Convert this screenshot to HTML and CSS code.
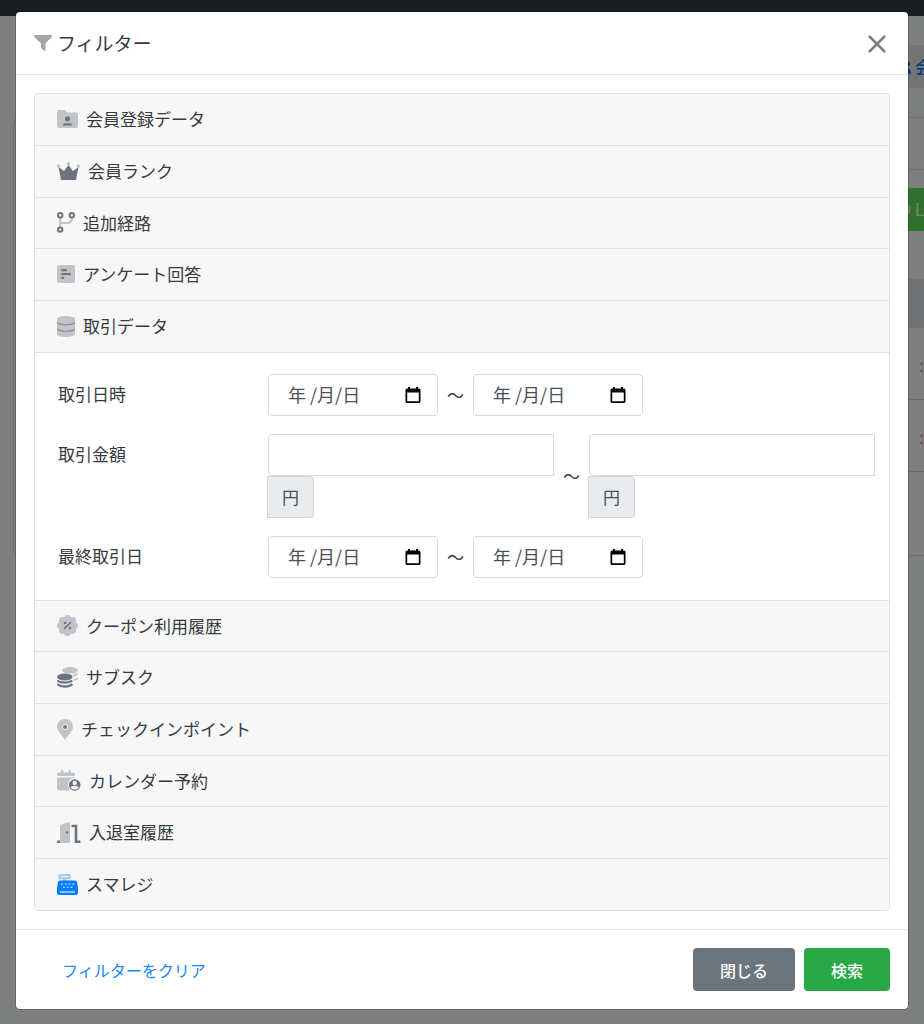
FILE: index.html
```html
<!DOCTYPE html>
<html lang="ja">
<head>
    <meta charset="UTF-8">
    <meta name="viewport" content="width=device-width, initial-scale=1.0">
    <title>フィルター</title>
    <link rel="stylesheet" href="styles.css">
</head>
<body>
    <!-- Page behind the modal -->
    <div class="page">
        <div class="navbar"></div>
        <div class="page-tabs">
            <span class="page-tab"><svg width="16" height="16" viewBox="0 0 16 16" fill="currentColor"><circle cx="6" cy="4" r="3"/><circle cx="12" cy="5" r="3"/><path d="M0 15c0-8 12-8 12 0zM10 9c4-1 6 2 6 6h-3z"/></svg> 会</span>
        </div>
        <div class="page-card">
            <div class="page-bar"></div>
            <div class="page-tools"><span class="page-download">D L</span></div>
            <div class="page-thead"></div>
            <div class="page-row"><span>:</span></div>
            <div class="page-row"><span>:</span></div>
            <div class="page-last"></div>
        </div>
    </div>

    <div class="backdrop">
        <form class="modal" role="dialog" aria-labelledby="modal-title">
            <div class="modal-header">
                <svg class="icon-filter" width="18" height="16" viewBox="0 0 18 16"><path fill="#a3a5a8" d="M1 0h16q1 0 1 1 0 .5-.4 1L11.500 8.500V15q0 1-1 .8l-3-2.200q-.5-.4-.5-1V8.500L.4 2Q0 1.500 0 1q0-1 1-1z"/></svg>
                <h5 id="modal-title" class="modal-title">フィルター</h5>
                <button type="button" class="close" aria-label="閉じる">
                    <svg width="18" height="18" viewBox="0 0 18 18"><path d="M1 1l16 16M17 1L1 17" stroke="#7f7f7f" stroke-width="2.500"/></svg>
                </button>
            </div>

            <div class="modal-body">
                <div class="accordion">
                    <button type="button" class="accordion-header">
                        <svg width="21" height="18" viewBox="0 0 21 18"><path fill="#c0c4c8" d="M2 0h6l2 2.500h9q2 0 2 2V16q0 2-2 2H2q-2 0-2-2V2q0-2 2-2z"/><g fill="#6c757d"><circle cx="10.500" cy="8.800" r="2.600"/><path d="M6 15.500q0-2.300 2-2.300h5q2 0 2 2.300z"/></g></svg>
                        会員登録データ
                    </button>
                    <button type="button" class="accordion-header">
                        <svg width="23" height="18" viewBox="0 0 23 18"><g fill="#c0c4c8"><circle cx="1.700" cy="4" r="1.700"/><circle cx="11.500" cy="1.800" r="1.800"/><circle cx="21.300" cy="4" r="1.700"/></g><path fill="#6c757d" d="M1.500 5L7 9l4.500-6L16 9l5.500-4L19 18H4z"/></svg>
                        会員ランク
                    </button>
                    <button type="button" class="accordion-header">
                        <svg width="18" height="21" viewBox="0 0 18 21" fill="none"><path d="M3.200 6v9M3.200 11H10q4.800 0 4.800-5" stroke="#c0c4c8" stroke-width="2.200"/><g stroke="#6c757d" stroke-width="2"><circle cx="3.200" cy="3.200" r="2.200"/><circle cx="14.800" cy="3.200" r="2.200"/><circle cx="3.200" cy="17.600" r="2.200"/></g></svg>
                        追加経路
                    </button>
                    <button type="button" class="accordion-header">
                        <svg width="18" height="18" viewBox="0 0 18 18"><rect width="18" height="18" rx="2" fill="#c0c4c8"/><path d="M5.200 5.200H9M5.200 9h7.800M5.200 12.800h1" stroke="#6c757d" stroke-width="2.200" stroke-linecap="round"/></svg>
                        アンケート回答
                    </button>
                    <button type="button" class="accordion-header" aria-expanded="true">
                        <svg width="18" height="21" viewBox="0 0 18 21"><path fill="#c0c4c8" d="M0 3c0-4 18-4 18 0v15c0 4-18 4-18 0z"/><path d="M0 6.500c3 3 15 3 18 0M0 13c3 3 15 3 18 0" fill="none" stroke="#858d94" stroke-width="1.200"/></svg>
                        取引データ
                    </button>

                    <div class="accordion-body">
                        <div class="field">
                            <label for="deal-from">取引日時</label>
                            <div class="range">
                                <span class="date">
                                    <input type="text" id="deal-from" class="form-control" placeholder="年 /月/日">
                                    <svg class="icon-date" width="16" height="18" viewBox="0 0 16 18"><path fill="#000" fill-rule="evenodd" d="M3 1h2v1.500h6V1h2v1.500h1q1.500 0 1.500 1.500v11.500q0 1.500-1.500 1.500H2Q.5 17 .5 15.500V4Q.5 2.500 2 2.500h1zM2.200 6.500v8.800h11.600V6.500z"/></svg>
                                </span>
                                <span class="tilde">～</span>
                                <span class="date">
                                    <input type="text" class="form-control" placeholder="年 /月/日" aria-label="取引日時 終了">
                                    <svg class="icon-date" width="16" height="18" viewBox="0 0 16 18"><path fill="#000" fill-rule="evenodd" d="M3 1h2v1.500h6V1h2v1.500h1q1.500 0 1.500 1.500v11.500q0 1.500-1.500 1.500H2Q.5 17 .5 15.500V4Q.5 2.500 2 2.500h1zM2.200 6.500v8.800h11.600V6.500z"/></svg>
                                </span>
                            </div>
                        </div>
                        <div class="field">
                            <label for="price-from">取引金額</label>
                            <div class="range">
                                <div class="amount">
                                    <input type="text" id="price-from" class="form-control">
                                    <span class="unit">円</span>
                                </div>
                                <span class="tilde">～</span>
                                <div class="amount">
                                    <input type="text" class="form-control" aria-label="取引金額 上限">
                                    <span class="unit">円</span>
                                </div>
                            </div>
                        </div>
                        <div class="field">
                            <label for="last-from">最終取引日</label>
                            <div class="range">
                                <span class="date">
                                    <input type="text" id="last-from" class="form-control" placeholder="年 /月/日">
                                    <svg class="icon-date" width="16" height="18" viewBox="0 0 16 18"><path fill="#000" fill-rule="evenodd" d="M3 1h2v1.500h6V1h2v1.500h1q1.500 0 1.500 1.500v11.500q0 1.500-1.500 1.500H2Q.5 17 .5 15.500V4Q.5 2.500 2 2.500h1zM2.200 6.500v8.800h11.600V6.500z"/></svg>
                                </span>
                                <span class="tilde">～</span>
                                <span class="date">
                                    <input type="text" class="form-control" placeholder="年 /月/日" aria-label="最終取引日 終了">
                                    <svg class="icon-date" width="16" height="18" viewBox="0 0 16 18"><path fill="#000" fill-rule="evenodd" d="M3 1h2v1.500h6V1h2v1.500h1q1.500 0 1.500 1.500v11.500q0 1.500-1.500 1.500H2Q.5 17 .5 15.500V4Q.5 2.500 2 2.500h1zM2.200 6.500v8.800h11.600V6.500z"/></svg>
                                </span>
                            </div>
                        </div>
                    </div>

                    <button type="button" class="accordion-header">
                        <svg width="21" height="21" viewBox="0 0 21 21"><g fill="#c0c4c8"><circle cx="10.500" cy="10.500" r="9.200"/><circle cx="10.500" cy="3.300" r="3.300"/><circle cx="15.600" cy="5.400" r="3.300"/><circle cx="17.700" cy="10.500" r="3.300"/><circle cx="15.600" cy="15.600" r="3.300"/><circle cx="10.500" cy="17.700" r="3.300"/><circle cx="5.400" cy="15.600" r="3.300"/><circle cx="3.300" cy="10.500" r="3.300"/><circle cx="5.400" cy="5.400" r="3.300"/></g><path d="M7.500 13.500l6-6" stroke="#6c757d" stroke-width="1.500" stroke-linecap="round"/><circle cx="8" cy="8" r="1.300" fill="#6c757d"/><circle cx="13" cy="13" r="1.300" fill="#6c757d"/></svg>
                        クーポン利用履歴
                    </button>
                    <button type="button" class="accordion-header">
                        <svg width="21" height="21" viewBox="0 0 21 21"><ellipse cx="13" cy="3.300" rx="7.800" ry="3.300" fill="#c0c4c8"/><path d="M16 8.500q3-.5 4.800-2M17 13q2.500-.5 3.800-1.700" fill="none" stroke="#c0c4c8" stroke-width="1.800"/><ellipse cx="7.800" cy="10" rx="7.800" ry="3.400" fill="#6c757d"/><path d="M.3 13.500c3 2.700 12 2.700 15 0M.3 17c3 3.300 12 3.300 15 0" fill="none" stroke="#6c757d" stroke-width="2.300"/></svg>
                        サブスク
                    </button>
                    <button type="button" class="accordion-header">
                        <svg width="16" height="21" viewBox="0 0 16 21"><path fill="#c0c4c8" d="M8 21C6 17 0 12 0 8a8 8 0 0116 0c0 4-6 9-8 13z"/><circle cx="8" cy="8" r="3" fill="#eee"/><circle cx="8" cy="8" r="2" fill="#6c757d"/></svg>
                        チェックインポイント
                    </button>
                    <button type="button" class="accordion-header">
                        <svg width="24" height="21" viewBox="0 0 24 21"><path fill="#c0c4c8" d="M2 2.500h2V1q0-1 1.200-1T6.500 1v1.500h5V1q0-1 1.300-1T14 1v1.500h2.500q1.500 0 1.500 2V6H0V4.500q0-2 2-2zM0 7.500h18V8q-7 0-7 7 0 3 2.500 5.500H2q-2 0-2-2z"/><circle cx="17.700" cy="15" r="5.800" fill="#6c757d"/><circle cx="17.700" cy="13" r="2.200" fill="#f7f7f7"/><path d="M13.800 18q0-2 2.200-2h3.400q2.200 0 2.200 2-4 3-7.800 0z" fill="#f7f7f7"/></svg>
                        カレンダー予約
                    </button>
                    <button type="button" class="accordion-header">
                        <svg width="24" height="21" viewBox="0 0 24 21"><path fill="#c0c4c8" d="M3 3l8.500-2.800q1.500-.3 1.500 1V21H3z"/><path d="M0 19.700h3M14.500 4H19v15.700h4.500" fill="none" stroke="#6c757d" stroke-width="2.600"/><circle cx="10" cy="10.500" r="1.200" fill="#6c757d"/></svg>
                        入退室履歴
                    </button>
                    <button type="button" class="accordion-header">
                        <svg width="21" height="21" viewBox="0 0 21 21"><path fill="#99caff" fill-rule="evenodd" d="M2.500 0h10q1 0 1 1v3.300q0 1-1 1H9V7H6V5.300H2.500q-1 0-1-1V1q0-1 1-1zM3.500 2v1.300h8V2z"/><path fill="#007bff" d="M3 6.500h15q1.700 0 2 1.500l1 6v5q0 2-2 2H2q-2 0-2-2v-5l1-6q.3-1.500 2-1.500z"/><path d="M4 10h14M6 13.300h10" stroke="#b5d9ff" stroke-width="1.600" stroke-dasharray="1.800 2"/><path d="M3 18h15" stroke="#b5d9ff" stroke-width="1.500"/></svg>
                        スマレジ
                    </button>
                </div>
            </div>

            <div class="modal-footer">
                <a href="#" class="clear-link">フィルターをクリア</a>
                <button type="button" class="btn btn-secondary">閉じる</button>
                <button type="submit" class="btn btn-success">検索</button>
            </div>
        </form>
    </div>
</body>
</html>
```
FILE: styles.css
```css
* {
    box-sizing: border-box;
}

body {
    margin: 0;
    font-family: "Noto Sans CJK JP", sans-serif;
    font-size: 17px;
    line-height: 26px;
    color: #343a40;
    background: #fbfffd;
}

button,
input {
    font-family: inherit;
    font-size: inherit;
    line-height: inherit;
}

/* Page behind the modal */
.page {
    height: 100vh;
    overflow: hidden;
}

.navbar {
    height: 16px;
    background: #343a40;
}

.page-tabs {
    display: flex;
    justify-content: flex-end;
    padding: 29px 0;
}

.page-tab {
    display: flex;
    align-items: center;
    gap: 4px;
    height: 43px;
    padding-left: 28px;
    background: #e9e9e9;
    color: #007bff;
    font-weight: 500;
    white-space: nowrap;
    margin-right: -8px;
}

.page-card {
    margin-left: 13px;
    padding-left: 10px;
    background: #fff;
    border: 1px solid #dcdcdc;
    border-right: 0;
    border-radius: 8px 0 0 8px;
}

.page-bar {
    height: 52px;
    border-bottom: 1px solid #dcdcdc;
}

.page-tools {
    display: flex;
    justify-content: flex-end;
    height: 109px;
    padding-top: 18px;
}

.page-download {
    height: 43px;
    padding: 8px 0 8px 80px;
    background: #5fe05f;
    color: #fff;
    text-align: right;
    white-space: nowrap;
}

.page-thead {
    height: 48px;
    background: #dee2e6;
}

.page-row {
    height: 72px;
    padding-top: 24px;
    border-top: 1px solid #dcdcdc;
    color: #d08000;
    text-align: right;
}

.page-last {
    height: 84px;
    border-top: 1px solid #dcdcdc;
}

/* Modal */
.backdrop {
    position: absolute;
    top: 0;
    left: 0;
    width: 100%;
    min-height: 100%;
    padding: 11px 15px;
    background: rgba(0, 0, 0, 0.5);
}

.modal {
    background: #fff;
    background-clip: padding-box;
    border: 1px solid rgba(0, 0, 0, 0.2);
    border-radius: 5px;
}

.modal-header {
    display: flex;
    align-items: center;
    gap: 5px;
    height: 63px;
    padding: 0 22px 0 18px;
    border-bottom: 1px solid #e3e5e7;
}

.modal-title {
    margin: 0;
    font-size: 19px;
    font-weight: 400;
}

.close {
    display: flex;
    margin-left: auto;
    padding: 2px 0 0;
    border: 0;
    background: none;
    cursor: pointer;
}

.modal-body {
    padding: 18px;
}

.accordion {
    border: 1px solid #dfdfdf;
    border-radius: 4px;
    overflow: hidden;
}

.accordion-header {
    display: flex;
    align-items: center;
    gap: 8px;
    width: 100%;
    height: 52px;
    padding: 0 22px 1px;
    border: 0;
    border-bottom: 1px solid #dfdfdf;
    background: #f7f7f7;
    color: #343a40;
    text-align: left;
    cursor: pointer;
}

.accordion-header:nth-of-type(3n) {
    height: 51px;
}

.accordion-header:last-child {
    height: 51px;
    border-bottom: 0;
}

.accordion-body {
    display: flex;
    flex-direction: column;
    gap: 18px;
    padding: 21px 14px 22px 23px;
    border-bottom: 1px solid #dfdfdf;
}

.field {
    display: grid;
    grid-template-columns: 210px 1fr;
}

.field label {
    padding-top: 7px;
}

.range {
    display: flex;
    align-items: center;
}

.tilde {
    width: 35px;
    flex-shrink: 0;
    text-align: center;
}

.form-control {
    width: 100%;
    height: 42px;
    padding: 5px 19px 7px;
    border: 1px solid #d5dae0;
    border-radius: 4px;
    background: #fff;
    color: #495057;
    font-size: 18px;
}

.form-control::placeholder {
    color: #495057;
    opacity: 1;
}

.date {
    position: relative;
    width: 170px;
}

.icon-date {
    position: absolute;
    top: 12px;
    right: 17px;
    pointer-events: none;
}

.amount {
    display: flex;
    flex-direction: column;
    align-items: flex-start;
    flex: 1;
}

.amount .form-control {
    border-radius: 4px 0 0 4px;
}

.unit {
    height: 42px;
    margin-left: -1px;
    padding: 7px 14px;
    border: 1px solid #d0d5db;
    border-radius: 0 4px 4px 0;
    background: #e9ecef;
    color: #495057;
}

.modal-footer {
    display: flex;
    align-items: center;
    gap: 9px;
    padding: 18px;
    border-top: 1px solid #e3e5e7;
}

.clear-link {
    margin-right: auto;
    padding-left: 28px;
    color: #1a88ff;
    font-size: 16px;
    text-decoration: none;
}

.btn {
    height: 43px;
    padding: 0 27px;
    border: 0;
    border-radius: 4px;
    color: #fff;
    font-size: 16px;
    font-weight: 500;
    cursor: pointer;
}

.btn-secondary {
    background: #6c757d;
}

.btn-success {
    background: #28a745;
}
```
